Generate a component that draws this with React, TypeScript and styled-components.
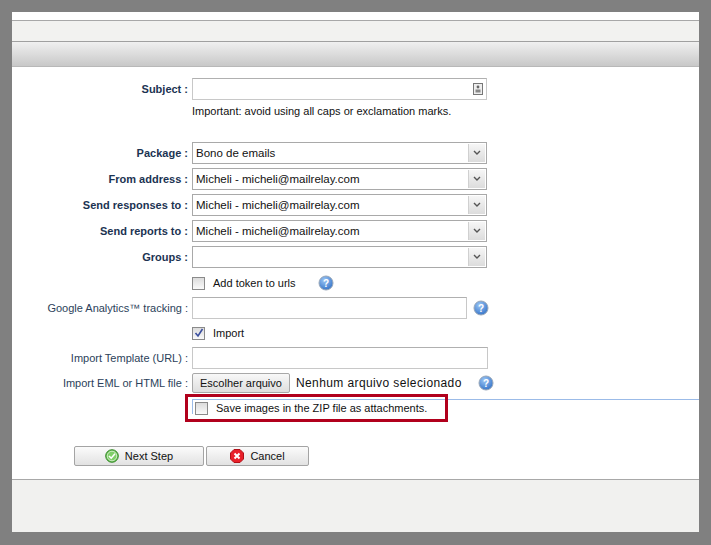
import React from "react"
import styled, { createGlobalStyle } from "styled-components"

const Global = createGlobalStyle`
  html, body { margin: 0; padding: 0; background: #808080; }
  body { font-family: "Liberation Sans", Arial, sans-serif; font-size: 11px; }
`

const Page = styled.div`
  padding: 12px 12px 13px 12px;
  height: 545px;
  box-sizing: border-box;
`

const Panel = styled.div`
  background: #fff;
  height: 520px;
  display: flex;
  flex-direction: column;
  overflow: hidden;
`

const TopGap = styled.div`
  height: 8px;
  border-bottom: 1px solid #a8a8a8;
`

const LightBand = styled.div`
  height: 20px;
  background: #f2f2f0;
  border-bottom: 1px solid #a0a0a0;
`

const GradBand = styled.div`
  height: 24px;
  background: linear-gradient(#f0f0f0, #c8c8c8);
  border-bottom: 1px solid #b8b8b8;
`

const Form = styled.div`
  flex: 1;
  padding-top: 11px;
`

const Row = styled.div<{ $h?: number; $mt?: number }>`
  display: flex;
  align-items: center;
  height: ${(p) => p.$h ?? 22}px;
  margin-top: ${(p) => p.$mt ?? 4}px;
`

const Label = styled.div<{ $bold?: boolean }>`
  width: 180px;
  text-align: right;
  padding-right: 4px;
  box-sizing: border-box;
  color: ${(p) => (p.$bold ? "#1b3352" : "#2b3f5a")};
  font-weight: ${(p) => (p.$bold ? "bold" : "normal")};
  font-size: 11px;
`

const Field = styled.div`
  display: flex;
  align-items: center;
  gap: 6px;
  position: relative;
`

const TextInput = styled.div<{ $w: number }>`
  width: ${(p) => p.$w}px;
  height: 22px;
  box-sizing: border-box;
  border: 1px solid #c8c8c8;
  border-top-color: #b0b0b0;
  background: #fff;
  position: relative;
`

const Select = styled.div`
  width: 295px;
  height: 22px;
  box-sizing: border-box;
  border: 1px solid #a9a9a9;
  display: flex;
  align-items: center;
  color: #111;
  font-size: 11.5px;
  padding-left: 3px;
  position: relative;
`

const Arrow = styled.div`
  position: absolute;
  right: 1px;
  top: 1px;
  bottom: 1px;
  width: 16px;
  background: linear-gradient(#f6f6f6, #dcdcdc);
  border-left: 1px solid #d0d0d0;
  display: flex;
  align-items: center;
  justify-content: center;
`

const Help = styled.div`
  color: #111;
  padding-left: 180px;
  margin-top: 5px;
  font-size: 11px;
`

const Check = styled.span<{ $on?: boolean }>`
  width: 11px;
  height: 11px;
  border: 1px solid #8a8a8a;
  background: linear-gradient(#dcdcdc, #fafafa);
  display: inline-flex;
  align-items: center;
  justify-content: center;
`

const CheckText = styled.span`
  color: #111;
  font-size: 11px;
  margin-left: 2px;
`

const FileBtn = styled.div`
  height: 18px;
  padding: 0 7px;
  border: 1px solid #a8a8a8;
  border-radius: 2px;
  background: linear-gradient(#f8f8f8, #dedede);
  display: flex;
  align-items: center;
  font-size: 11px;
  color: #111;
`

const FileText = styled.span`
  font-size: 12px;
  letter-spacing: 0.4px;
  color: #111;
`

const Highlight = styled.div`
  position: absolute;
  left: -7px;
  top: -8px;
  width: 263px;
  height: 28px;
  border: 3px solid #b1001c;
  box-sizing: border-box;
  pointer-events: none;
`

const FocusLine = styled.div`
  position: absolute;
  left: 0;
  top: -3px;
  width: 507px;
  height: 14px;
  border-top: 1px solid #9bbbe8;
  border-left: 1px solid #9bbbe8;
`

const Buttons = styled.div`
  display: flex;
  gap: 2px;
  padding-left: 62px;
  margin-top: 28px;
`

const Btn = styled.div<{ $w: number }>`
  width: ${(p) => p.$w}px;
  height: 20px;
  box-sizing: border-box;
  border: 1px solid #a4a4a4;
  border-radius: 2px;
  background: linear-gradient(#fbfbfb, #e2e2e2);
  display: flex;
  align-items: center;
  justify-content: center;
  gap: 6px;
  font-size: 11px;
  color: #111;
`

const Footer = styled.div`
  height: 52px;
  background: #f1f1ef;
  border-top: 1px solid #a8a8a8;
`

const HelpIcon = () => (
  <svg width="16" height="16" viewBox="0 0 16 16">
    <defs>
      <radialGradient id="hg" cx="0.4" cy="0.3" r="0.8">
        <stop offset="0" stopColor="#9cc6f5" />
        <stop offset="1" stopColor="#2b6cc4" />
      </radialGradient>
    </defs>
    <circle cx="8" cy="8" r="7" fill="url(#hg)" stroke="#9aa8b8" />
    <text x="8" y="12" textAnchor="middle" fontSize="10" fontWeight="bold" fill="#fff" fontFamily="Liberation Sans">?</text>
  </svg>
)

const ArrowIcon = () => (
  <svg width="8" height="6" viewBox="0 0 8 6">
    <path d="M1 1 L4 4 L7 1" stroke="#555" strokeWidth="1.4" fill="none" />
  </svg>
)

const Tick = () => (
  <svg width="10" height="10" viewBox="0 0 10 10">
    <path d="M1.5 5 L4 8 L8.5 1" stroke="#3b4f9e" strokeWidth="1.6" fill="none" />
  </svg>
)

const OkIcon = () => (
  <svg width="14" height="14" viewBox="0 0 14 14">
    <circle cx="7" cy="7" r="6.3" fill="#5cb84a" stroke="#3a8a2c" />
    <circle cx="7" cy="7" r="4.8" fill="#7fcf68" stroke="#e8f5e0" strokeWidth="0.8" />
    <path d="M4 7 L6.2 9.2 L10 4.8" stroke="#fff" strokeWidth="1.6" fill="none" />
  </svg>
)

const CancelIcon = () => (
  <svg width="14" height="14" viewBox="0 0 14 14">
    <path d="M4 0.5 H10 L13.5 4 V10 L10 13.5 H4 L0.5 10 V4 Z" fill="#e8202a" stroke="#b01018" />
    <path d="M4.5 4.5 L9.5 9.5 M9.5 4.5 L4.5 9.5" stroke="#fff" strokeWidth="2" />
  </svg>
)

const SelectRow = ({ label, value }: { label: string; value: string }) => (
  <Row>
    <Label $bold>{label} :</Label>
    <Select>
      {value}
      <Arrow>
        <ArrowIcon />
      </Arrow>
    </Select>
  </Row>
)

export default function App() {
  return (
    <Page>
      <Global />
      <Panel>
        <TopGap />
        <LightBand />
        <GradBand />
        <Form>
          <Row $mt={0}>
            <Label $bold>Subject :</Label>
            <TextInput $w={295}>
              <svg style={{ position: "absolute", right: 3, top: 4 }} width="10" height="12" viewBox="0 0 10 12">
                <rect x="0.5" y="0.5" width="9" height="11" fill="#eee" stroke="#777" />
                <circle cx="5" cy="4" r="1.4" fill="#666" />
                <rect x="2.5" y="6.5" width="5" height="3" fill="#888" />
              </svg>
            </TextInput>
          </Row>
          <Help>Important: avoid using all caps or exclamation marks.</Help>
          <div style={{ height: 21 }} />
          <SelectRow label="Package" value="Bono de emails" />
          <SelectRow label="From address" value="Micheli - micheli@mailrelay.com" />
          <SelectRow label="Send responses to" value="Micheli - micheli@mailrelay.com" />
          <SelectRow label="Send reports to" value="Micheli - micheli@mailrelay.com" />
          <SelectRow label="Groups" value="" />
          <Row $mt={5} $h={20}>
            <Label />
            <Field>
              <Check />
              <CheckText>Add token to urls</CheckText>
              <span style={{ width: 10 }} />
              <HelpIcon />
            </Field>
          </Row>
          <Row $mt={4}>
            <Label>Google Analytics™ tracking :</Label>
            <Field>
              <TextInput $w={275} />
              <HelpIcon />
            </Field>
          </Row>
          <Row $mt={4} $h={20}>
            <Label />
            <Field>
              <Check>
                <Tick />
              </Check>
              <CheckText>Import</CheckText>
            </Field>
          </Row>
          <Row $mt={4}>
            <Label>Import Template (URL) :</Label>
            <TextInput $w={296} />
          </Row>
          <Row $mt={3}>
            <Label>Import EML or HTML file :</Label>
            <Field>
              <FileBtn>Escolher arquivo</FileBtn>
              <FileText>Nenhum arquivo selecionado</FileText>
              <span style={{ width: 4 }} />
              <HelpIcon />
            </Field>
          </Row>
          <Row $mt={4} $h={20}>
            <Label />
            <Field>
              <FocusLine />
              <Check style={{ marginLeft: 3 }} />
              <CheckText>Save images in the ZIP file as attachments.</CheckText>
              <Highlight />
            </Field>
          </Row>
          <Buttons>
            <Btn $w={130}>
              <OkIcon />
              Next Step
            </Btn>
            <Btn $w={103}>
              <CancelIcon />
              Cancel
            </Btn>
          </Buttons>
        </Form>
        <Footer />
      </Panel>
    </Page>
  )
}
